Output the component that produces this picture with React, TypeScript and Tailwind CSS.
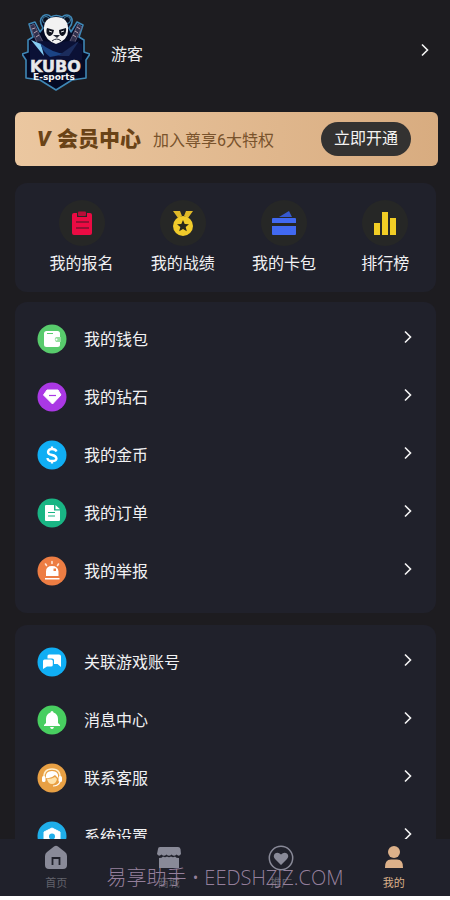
import React from 'react';

const sans = "font-['Roboto','Noto_Sans_CJK_SC',sans-serif]";

const Logo = () => (
  <svg viewBox="22 14 68 78" className="h-[78px] w-[68px] shrink-0" role="img" aria-label="KUBO E-sports">
    <path
      d="M29 25L35 23L40 33L43 29Q38 21 43 17Q48 14 51 18Q56 15 62 18Q67 14 71 18Q74 23 69 29L71 33L77 23L83 26L79 38L84 41L84 53L90 55L86 61V79L72 81L56 91L40 81L26 79V61L22 55L28 53V41L33 38Z"
      fill="#050a24"
      stroke="#3f87b5"
      strokeWidth="1.6"
      strokeLinejoin="round"
    />
    {/* swords */}
    <path d="M30 27L34 25L43 43L38 46Z" fill="#30304d" stroke="#6f6a88" strokeWidth=".8" />
    <path d="M82 28L78 25L70 42L74 45Z" fill="#30304d" stroke="#6f6a88" strokeWidth=".8" />
    <path d="M32 30L35 29M34 34L37 32M36 38L39 36M80 30L77 28M78 34L75 32M76 38L73 36" stroke="#b9a1ac" strokeWidth="1" />
    {/* cloak */}
    <path d="M30 45Q44 39 56 45Q70 39 82 45V61H30Z" fill="#0b1136" />
    <path d="M31 41L44 57L41 45Z" fill="#86cdf2" />
    <path d="M40 44Q52 54 66 55L50 58Q43 53 40 44Z" fill="#1b4484" />
    <path d="M58 57L79 42L69 57Z" fill="#1b2c5c" />
    {/* panda */}
    <circle cx="46" cy="21" r="3.5" fill="#0b1020" stroke="#4584a8" strokeWidth="1" />
    <circle cx="67" cy="21" r="3.5" fill="#0b1020" stroke="#4584a8" strokeWidth="1" />
    <path d="M56 18Q69 18 68 32Q68 41 56 45Q45 41 44 32Q43 18 56 18Z" fill="#f2f2f2" />
    <path d="M54 31L47 29Q45 34 49 37Q53 37 54 31ZM59 31L66 29Q67 34 63 37Q59 37 59 31Z" fill="#10131f" />
    <path d="M49 32L52 33M64 32L61 33" stroke="#fff" strokeWidth=".9" />
    <path d="M53 36H60L57 39Z" fill="#222735" />
    <path d="M52 42Q57 38 61 42" fill="none" stroke="#222735" strokeWidth="1" />
    <text x="30" y="73" fill="#e7e7ea" stroke="#e7e7ea" strokeWidth=".5" fontSize="16" fontWeight="700" fontFamily="DejaVu Sans">KUBO</text>
    <text x="33" y="81" fill="#f4f4f7" fontSize="9" fontWeight="700" fontFamily="DejaVu Sans">E-sports</text>
  </svg>
);

const Chevron = () => (
  <svg viewBox="0 0 10 16" className="mb-1 h-4 w-[10px] shrink-0" fill="none" stroke="#f5f5f5" strokeWidth="1.6" aria-hidden="true">
    <path d="M2 2.500L7.500 8L2 13.500" />
  </svg>
);

const shortcuts = [
  {
    label: '我的报名',
    icon: (
      <>
        <path d="M4 4H7V8H17V4H20Q22 4 22 6V24Q22 26 20 26H4Q2 26 2 24V6Q2 4 4 4Z" fill="#eb0b43" />
        <rect x="8" y="2.500" width="8" height="4.500" rx="1" fill="#b90d38" />
        <path d="M6 13H19M6 19H19" stroke="#771530" strokeWidth="1.600" />
      </>
    ),
  },
  {
    label: '我的战绩',
    icon: (
      <>
        <path d="M2 2H9L11 7L7 9ZM15 2H22L17 9L13 7Z" fill="#e0b928" />
        <circle cx="12" cy="17" r="10" fill="#f1cb2b" />
        <path d="M12 11L13.700 15L18 15.300L14.700 18.100L15.800 22.300L12 20L8.200 22.300L9.300 18.100L6 15.300L10.300 15Z" fill="#27271c" />
      </>
    ),
  },
  {
    label: '我的卡包',
    icon: (
      <>
        <path d="M7 8L17 2L20 8Z" fill="#3659cf" />
        <path d="M1 9H23Q24 9 24 10V14H0V10Q0 9 1 9ZM0 17H24V25Q24 26 23 26H1Q0 26 0 25Z" fill="#4169f1" />
      </>
    ),
  },
  {
    label: '排行榜',
    icon: <path d="M1 14H7V26H1ZM9 3H15V26H9ZM17 9H23V26H17Z" fill="#f1cd25" />,
  },
];

const walletRows = [
  {
    label: '我的钱包',
    icon: (
      <>
        <circle cx="15" cy="15" r="14.500" fill="#58cb6c" />
        <rect x="7" y="7" width="16" height="16" rx="2.500" fill="#fff" />
        <path d="M10 9.500H16" stroke="#58cb6c" strokeWidth="1" />
        <path d="M24 13H19Q16.500 15 19 18H24Z" fill="#94df9e" />
        <circle cx="19.500" cy="15.500" r="1" fill="#fff" />
      </>
    ),
  },
  {
    label: '我的钻石',
    icon: (
      <>
        <circle cx="15" cy="15" r="14.500" fill="#aa38e4" />
        <path d="M10 8H21L24 13L15.500 22L6.500 13Z" fill="#fff" stroke="#fff" strokeLinejoin="round" />
        <path d="M12 13.500H19" stroke="#aa38e4" strokeWidth="1.200" />
      </>
    ),
  },
  {
    label: '我的金币',
    icon: (
      <>
        <circle cx="15" cy="15" r="14.500" fill="#10aef4" />
        <path d="M19.500 11.500Q18.500 9 15 9T11 12Q11 14.300 15 15T19.500 18.500Q19.500 21 15 21T10.500 18M15 6.500V9.500M15 20.500V23.500" fill="none" stroke="#fff" strokeWidth="2.300" />
      </>
    ),
  },
  {
    label: '我的订单',
    icon: (
      <>
        <circle cx="15" cy="15" r="14.500" fill="#19b584" />
        <path d="M9 7H17V12.500H23V22Q23 23 22 23H9Q8 23 8 22V8Q8 7 9 7Z" fill="#fff" />
        <path d="M18.500 7L23 11.300H18.500Z" fill="#fff" />
        <path d="M11 14.500H18M11 18H18" stroke="#19b584" strokeWidth="1.200" />
      </>
    ),
  },
  {
    label: '我的举报',
    icon: (
      <>
        <circle cx="15" cy="15" r="14.500" fill="#ed7d43" />
        <path d="M9 20V15.500Q9 10 15 10T21.500 15.500V20ZM8 22H22.500V23.500H8Z" fill="#fff" />
        <path d="M16.500 12.500H19V15H16.500Z" fill="#ed7d43" />
        <path d="M8.500 8L9.500 9.500M15 5.500V7.500M21.500 8L20.500 9.500" stroke="#ffe5d5" strokeWidth="1.600" strokeLinecap="round" />
      </>
    ),
  },
];

const serviceRows = [
  {
    label: '关联游戏账号',
    icon: (
      <>
        <circle cx="15" cy="15" r="14.500" fill="#10aef4" />
        <path d="M12 7.500H22Q24 7.500 24 9.500V20L20.500 17H17V13Q17 11.500 15 11.500H10.500V9Q10.500 7.500 12 7.500Z" fill="#fff" />
        <path d="M7.500 12.500H14Q15.800 12.500 15.800 14V18Q15.800 19.500 14 19.500H10L6 22V14Q6 12.500 7.500 12.500Z" fill="#fff" />
      </>
    ),
  },
  {
    label: '消息中心',
    icon: (
      <>
        <circle cx="15" cy="15" r="14.500" fill="#48ce60" />
        <path d="M15 6Q16.500 6 16.500 7.500Q21 9 21 14V18L23 20V21H7V20L9 18V14Q9 9 13.500 7.500Q13.500 6 15 6ZM13 22H17Q16.500 24 15 24T13 22Z" fill="#fff" />
      </>
    ),
  },
  {
    label: '联系客服',
    icon: (
      <>
        <circle cx="15" cy="15" r="14.500" fill="#e8a044" />
        <path d="M7 16Q6 6 15 6T23 16" fill="none" stroke="#fff0cf" strokeWidth="1.500" />
        <path d="M9 15Q8 8 15 8T21 15L18 12Q14 16 9 15Z" fill="#fff" />
        <rect x="5" y="13" width="3.500" height="6" rx="1.500" fill="#fff" />
        <rect x="21.500" y="13" width="3.500" height="6" rx="1.500" fill="#fff" />
        <path d="M10 16Q15 16 18 14L20 16Q19 21 15 21T10 16Z" fill="#ffe2aa" />
        <path d="M23 19Q21 23 16 23" fill="none" stroke="#fff" strokeWidth="1.200" />
      </>
    ),
  },
  {
    label: '系统设置',
    icon: (
      <>
        <circle cx="15" cy="15" r="14.500" fill="#1faee9" />
        <path d="M15 7L23 11V20L15 24L7 20V11Z" fill="#fff" stroke="#fff" strokeLinejoin="round" />
        <circle cx="15" cy="15.500" r="3" fill="#1faee9" />
      </>
    ),
  },
];

const tabs = [
  {
    label: '首页',
    active: false,
    icon: (
      <>
        <path d="M12 2.500Q14 1 16 2.500L23 8Q25 9.500 25 12V21Q25 25 21 25H7Q3 25 3 21V12Q3 9.500 5 8Z" fill="#898a98" />
        <path d="M10.500 21V14H17.500V21" fill="none" stroke="#20212b" strokeWidth="1.800" />
      </>
    ),
  },
  {
    label: '商城',
    active: false,
    icon: (
      <>
        <path d="M5 3H23Q25 3 25.500 5L26 10Q24 13 21.500 10.500Q19 13 16.500 10.500Q14 13 11.500 10.500Q9 13 6.500 10.500Q4 13 2 10L3 5Q3 3 5 3Z" fill="#898a98" />
        <path d="M4 14Q7 14 8 12.500Q10 14 12 12.500Q14 14 16 12.500Q18 14 20 12.500Q21 14 24 14V24H4Z" fill="#898a98" />
      </>
    ),
  },
  {
    label: '推广',
    active: false,
    icon: (
      <>
        <circle cx="14" cy="14" r="11.700" fill="none" stroke="#898a98" strokeWidth="1.500" />
        <path d="M14 21L8 15Q5.500 12 8 9.500Q11 7.500 14 10.500Q17 7.500 20 9.500Q22.500 12 20 15Z" fill="#898a98" />
      </>
    ),
  },
  {
    label: '我的',
    active: true,
    icon: (
      <>
        <circle cx="14" cy="8" r="6" fill="#dcb18a" />
        <path d="M5 24Q4.500 15.500 11 15.500H17Q23.500 15.500 23 24Z" fill="#dcb18a" />
      </>
    ),
  },
];

type Row = { label: string; icon: React.ReactNode };

const MenuCard = ({ rows }: { rows: Row[] }) => (
  <section className="mr-[14px] ml-[15px] shrink-0 rounded-xl bg-[#20212b] pt-2 pb-[13px]">
    {rows.map((row) => (
      <a key={row.label} href="#" className="flex h-[58px] items-center pr-[23px] pl-[22px]">
        <svg viewBox="0 0 30 30" className="h-[30px] w-[30px] shrink-0" aria-hidden="true">
          {row.icon}
        </svg>
        <span className="ml-[17px] flex-1 pt-0.5 text-base text-[#f1f1f3]">{row.label}</span>
        <Chevron />
      </a>
    ))}
  </section>
);

const App = () => {
  return (
    <div className={`flex h-screen flex-col bg-white pb-1 ${sans}`}>
      <main className="flex min-h-0 flex-1 flex-col overflow-hidden bg-[#1d1c20]">
        <a href="#" className="flex h-28 shrink-0 items-center pr-5 pb-2 pl-[22px]">
          <Logo />
          <span className="ml-[21px] flex-1 pt-1.5 text-base text-[#eeeeef]">游客</span>
          <Chevron />
        </a>

        {/* Membership banner */}
        <section className="mr-3 ml-[15px] flex h-[54px] shrink-0 items-center rounded-md bg-linear-to-r from-[#ebc7a0] to-[#d8ac80] pr-[27px] pl-[22px]">
          <h2 className="flex items-center text-[21px] leading-7 font-black whitespace-nowrap text-[#6a4317]">
            <i className="w-5">V</i>
            会员中心
          </h2>
          <span className="ml-3 flex-1 pt-1 text-base whitespace-nowrap text-[#79532c]">加入尊享6大特权</span>
          <button type="button" className="h-[34px] w-[90px] rounded-full bg-[#333231] text-base text-[#f4f3f1]">
            立即开通
          </button>
        </section>

        <section className="mt-[17px] mr-[14px] mb-[10px] ml-[15px] grid h-[109px] shrink-0 grid-cols-4 rounded-xl bg-[#20212b] pl-4">
          {shortcuts.map((item) => (
            <a key={item.label} href="#" className="flex flex-col items-center pt-[17px]">
              <span className="flex h-[46px] w-[46px] items-center justify-center rounded-full bg-[#262726]">
                <svg viewBox="0 0 24 28" className="h-7 w-6" aria-hidden="true">
                  {item.icon}
                </svg>
              </span>
              <span className="mt-1.5 text-base text-[#f1f1f3]">{item.label}</span>
            </a>
          ))}
        </section>

        <MenuCard rows={walletRows} />
        <div className="h-3 shrink-0" />
        <MenuCard rows={serviceRows} />
      </main>

      <nav className="relative grid h-[57px] shrink-0 grid-cols-4 bg-[#20212b]">
        {tabs.map((tab) => (
          <a key={tab.label} href="#" className="flex flex-col items-center pt-[5px]">
            <svg viewBox="0 0 28 28" className="h-7 w-7" aria-hidden="true">
              {tab.icon}
            </svg>
            <span className={tab.active ? 'mt-1 text-[11px] leading-4 text-[#dcb18a]' : 'mt-1 text-[11px] leading-4 text-[#62636c]'}>
              {tab.label}
            </span>
          </a>
        ))}
        <p className="pointer-events-none absolute inset-x-0 bottom-1 text-center font-['Open_Sans','Noto_Sans_CJK_SC',sans-serif] text-xl leading-7 font-light whitespace-nowrap text-[#a58dab]/90">
          易享助手 • EEDSHZJZ.COM
        </p>
      </nav>
    </div>
  );
};

export default App;
